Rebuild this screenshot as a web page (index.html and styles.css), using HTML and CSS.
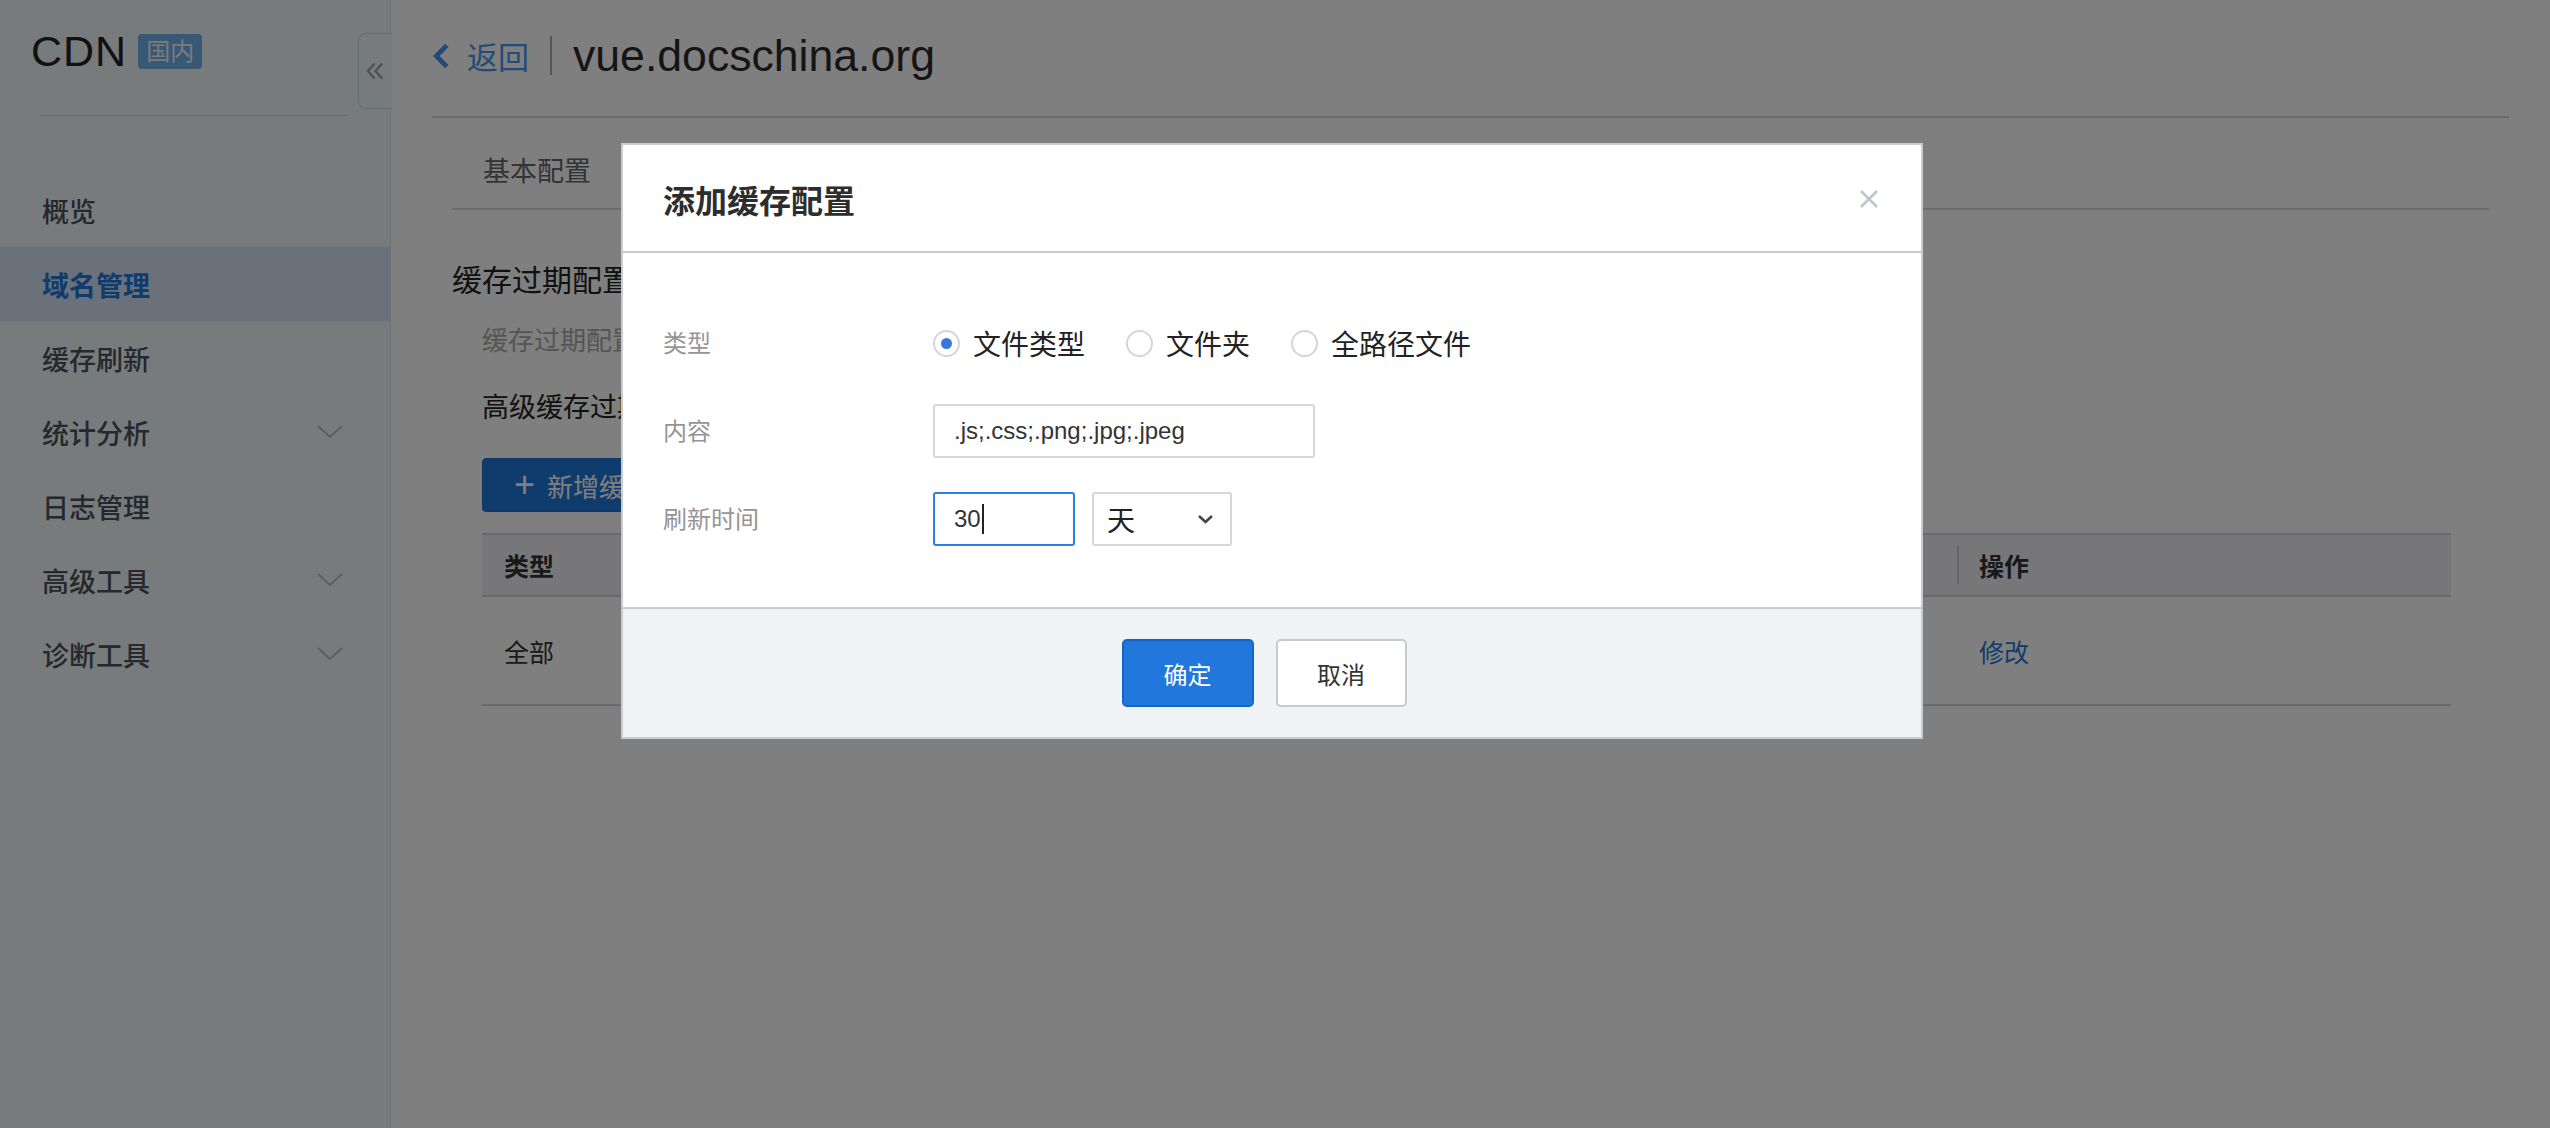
FILE: index.html
```html
<!DOCTYPE html>
<html lang="zh-CN">
<head>
<meta charset="utf-8">
<title>CDN - 域名管理</title>
<link rel="stylesheet" href="styles.css">
</head>
<body>
<div class="app">
  <aside class="sidebar">
    <div class="brand">
      <span class="brand-name">CDN</span>
      <span class="brand-tag">国内</span>
    </div>
    <div class="brand-divider"></div>
    <nav class="menu">
      <a class="menu-item">概览</a>
      <a class="menu-item active">域名管理</a>
      <a class="menu-item">缓存刷新</a>
      <a class="menu-item">统计分析<svg class="menu-caret" viewBox="0 0 26 14"><polyline points="1,1 13,12 25,1"/></svg></a>
      <a class="menu-item">日志管理</a>
      <a class="menu-item">高级工具<svg class="menu-caret" viewBox="0 0 26 14"><polyline points="1,1 13,12 25,1"/></svg></a>
      <a class="menu-item">诊断工具<svg class="menu-caret" viewBox="0 0 26 14"><polyline points="1,1 13,12 25,1"/></svg></a>
    </nav>
    <button class="collapse-tab"><svg viewBox="0 0 18 18"><polyline points="8,1 1,9 8,17"/><polyline points="16,1 9,9 16,17"/></svg></button>
  </aside>

  <main class="main">
    <header class="topbar">
      <a class="back"><svg class="back-icon" viewBox="0 0 17 24"><polyline points="14,2 4,12 14,22"/></svg><span>返回</span></a>
      <span class="topbar-sep"></span>
      <h1 class="domain">vue.docschina.org</h1>
    </header>

    <section class="content">
      <div class="tabs">
        <span class="tab">基本配置</span>
      </div>

      <h2 class="section-title">缓存过期配置</h2>
      <div class="section-body">
        <p class="section-desc">缓存过期配置</p>
        <h3 class="sub-title">高级缓存过期</h3>
        <button class="btn-add"><span class="plus">+</span>新增缓存</button>

        <div class="table">
          <div class="tr th">
            <div class="td">类型</div>
            <div class="td"></div>
            <div class="td"></div>
            <div class="td">操作</div>
          </div>
          <div class="tr">
            <div class="td">全部</div>
            <div class="td"></div>
            <div class="td"></div>
            <div class="td"><a class="link">修改</a></div>
          </div>
        </div>
      </div>
    </section>
  </main>
</div>

<div class="mask">
  <div class="modal">
    <div class="modal-head">
      <h2 class="modal-title">添加缓存配置</h2>
      <svg class="modal-close" viewBox="0 0 20 20"><path d="M2 2 L18 18 M18 2 L2 18"/></svg>
    </div>
    <div class="modal-body">
      <div class="form-row">
        <label class="form-label">类型</label>
        <div class="form-ctrl radios">
          <span class="radio checked"><span class="radio-dot"></span>文件类型</span>
          <span class="radio"><span class="radio-dot"></span>文件夹</span>
          <span class="radio"><span class="radio-dot"></span>全路径文件</span>
        </div>
      </div>
      <div class="form-row">
        <label class="form-label">内容</label>
        <div class="form-ctrl">
          <div class="input input-wide">.js;.css;.png;.jpg;.jpeg</div>
        </div>
      </div>
      <div class="form-row">
        <label class="form-label">刷新时间</label>
        <div class="form-ctrl">
          <div class="input input-num focused">30<span class="caret"></span></div>
          <div class="select"><span>天</span><svg class="select-arrow" viewBox="0 0 17 10"><polyline points="2,2 8.5,8 15,2"/></svg></div>
        </div>
      </div>
    </div>
    <div class="modal-foot">
      <button class="btn btn-primary">确定</button>
      <button class="btn btn-default">取消</button>
    </div>
  </div>
</div>
</body>
</html>
```
FILE: styles.css
```css
* { box-sizing: border-box; }
html, body { margin: 0; padding: 0; }
body {
  width: 2550px;
  height: 1128px;
  overflow: hidden;
  background: #fff;
  font-family: "Liberation Sans", "Noto Sans CJK SC", sans-serif;
  color: #333;
}
h1, h2, h3, p { margin: 0; font-weight: normal; }
button { font-family: inherit; }

.app { display: flex; height: 1128px; }

/* sidebar */
.sidebar {
  position: relative;
  width: 391px;
  flex: none;
  background: #f0f6f6;
  border-right: 1px solid #dde6e8;
}
.brand {
  display: flex;
  align-items: center;
  height: 43px;
  margin-top: 30px;
  padding-left: 31px;
}
.brand-name {
  font-size: 43px;
  line-height: 43px;
  color: #222;
  letter-spacing: 1px;
}
.brand-tag {
  margin-left: 11px;
  width: 64px;
  height: 35px;
  border-radius: 4px;
  background: #70b0ea;
  color: #f2f8ff;
  font-size: 24px;
  line-height: 35px;
  text-align: center;
}
.brand-divider {
  margin: 42px 0 0 39px;
  width: 309px;
  height: 1px;
  background: #cfd9de;
}
.menu { margin-top: 57px; display: flex; flex-direction: column; }
.menu-item {
  display: flex;
  align-items: center;
  justify-content: space-between;
  height: 74px;
  padding: 0 47px 0 42px;
  font-size: 27px;
  font-weight: 500;
  color: #4a5058;
}
.menu-item.active {
  background: #d6e2f4;
  color: #2177db;
  font-weight: 700;
}
.menu-caret {
  width: 26px;
  height: 14px;
  fill: none;
  stroke: #b4bec7;
  stroke-width: 2;
}
.collapse-tab {
  position: absolute;
  left: 358px;
  top: 33px;
  width: 34px;
  height: 76px;
  padding: 0;
  border: 1px solid #c9d6de;
  border-right: none;
  border-radius: 8px 0 0 8px;
  background: #f0f6f6;
  display: flex;
  align-items: center;
  justify-content: center;
}
.collapse-tab svg {
  width: 17px;
  height: 18px;
  fill: none;
  stroke: #9aa3ab;
  stroke-width: 2.4;
}

/* main */
.main { flex: 1; padding: 0 41px; }
.topbar {
  display: flex;
  align-items: center;
  height: 118px;
  padding-bottom: 5px;
  border-bottom: 2px solid #d4d4d4;
}
.back {
  display: flex;
  align-items: center;
  color: #4796f2;
  font-size: 31px;
}
.back-icon {
  width: 18px;
  height: 26px;
  margin-right: 17px;
  fill: none;
  stroke: #4796f2;
  stroke-width: 4.5;
}
.topbar-sep {
  width: 2px;
  height: 39px;
  margin: 0 21px 0 21px;
  background: #aaa;
}
.domain {
  font-size: 44.6px;
  color: #2b2b2b;
  line-height: 50px;
}

.content { padding: 0 20px; }
.tabs {
  display: flex;
  align-items: center;
  height: 92px;
  padding-top: 12px;
  border-bottom: 2px solid #d8d8d8;
}
.tab {
  padding: 0 31px;
  font-size: 27px;
  color: #666;
}
.section-title {
  margin-top: 51px;
  font-size: 30px;
  line-height: 40px;
  color: #222;
}
.section-body { padding: 0 38px 0 30px; }
.section-desc {
  margin-top: 22px;
  font-size: 26px;
  line-height: 36px;
  color: #aaa;
}
.sub-title {
  margin-top: 31px;
  font-size: 27px;
  line-height: 36px;
  color: #222;
}
.btn-add {
  margin-top: 32px;
  height: 54px;
  width: 240px;
  padding: 0 0 0 31px;
  border: 1px solid #1a6bcc;
  border-radius: 4px;
  background: #2177db;
  color: #fff;
  font-size: 26px;
  display: flex;
  align-items: center;
}
.plus { font-size: 36px; font-weight: 300; margin-right: 12px; line-height: 1; }

.table { margin-top: 21px; }
.tr {
  display: grid;
  grid-template-columns: 492px 492px 491px 1fr;
  border-bottom: 2px solid #d4d5da;
  height: 109px;
  align-items: center;
  font-size: 25px;
  color: #333;
}
.tr.th {
  height: 64px;
  border-top: 2px solid #d4d5da;
  background: #eeeff3;
  font-weight: 700;
}
.td { padding-left: 22px; position: relative; }
.th .td + .td::before {
  content: "";
  position: absolute;
  left: 0;
  top: 50%;
  width: 2px;
  height: 39px;
  margin-top: -20px;
  background: #c9ccd2;
}
.link { color: #2177db; }

/* modal */
.mask {
  position: fixed;
  inset: 0;
  background: rgba(0, 0, 0, 0.5);
  display: flex;
  justify-content: center;
  align-items: flex-start;
  padding: 143px 6px 0 0;
}
.modal {
  width: 1302px;
  background: #fff;
  border: 2px solid #c8ccd0;
}
.modal-head {
  display: flex;
  align-items: center;
  justify-content: space-between;
  height: 108px;
  padding: 2px 42px 0 40px;
  border-bottom: 2px solid #c6c9cd;
}
.modal-title {
  font-size: 32px;
  font-weight: 700;
  color: #2d2d2d;
}
.modal-close {
  width: 20px;
  height: 20px;
  fill: none;
  stroke: #bfc5cb;
  stroke-width: 2.5;
}
.modal-body {
  padding: 63px 40px 61px;
  display: flex;
  flex-direction: column;
  gap: 34px;
}
.form-row { display: flex; align-items: center; height: 54px; }
.form-label {
  width: 270px;
  flex: none;
  font-size: 24px;
  color: #959595;
  padding-bottom: 4px;
}
.form-ctrl { display: flex; align-items: center; }
.radios { gap: 41px; }
.radio {
  display: inline-flex;
  align-items: center;
  font-size: 28px;
  color: #222;
}
.radio-dot {
  width: 27px;
  height: 27px;
  margin-right: 13px;
  border: 2px solid #d2d6dc;
  border-radius: 50%;
  background: #fff;
  display: inline-flex;
  align-items: center;
  justify-content: center;
}
.radio.checked .radio-dot::after {
  content: "";
  width: 11px;
  height: 11px;
  border-radius: 50%;
  background: #3b78d5;
}
.input {
  display: flex;
  align-items: center;
  height: 54px;
  padding-left: 19px;
  border: 2px solid #d5d7da;
  border-radius: 3px;
  font-size: 24px;
  color: #333;
}
.input-wide { width: 382px; }
.input-num { width: 142px; }
.input.focused { border-color: #2c7fe2; }
.caret {
  width: 2px;
  height: 30px;
  margin-left: 1px;
  background: #222;
}
.select {
  display: flex;
  align-items: center;
  justify-content: space-between;
  width: 140px;
  height: 54px;
  margin-left: 17px;
  padding: 0 16px 0 13px;
  border: 2px solid #d5d7da;
  border-radius: 3px;
  font-size: 28px;
  color: #222;
}
.select-arrow {
  width: 17px;
  height: 10px;
  fill: none;
  stroke: #444;
  stroke-width: 2.5;
}
.modal-foot {
  display: flex;
  align-items: center;
  justify-content: center;
  gap: 22px;
  height: 130px;
  padding-right: 16px;
  border-top: 2px solid #c8cbcf;
  background: #eff3f6;
}
.btn {
  height: 68px;
  border-radius: 5px;
  font-size: 24px;
  padding: 0;
}
.btn-primary {
  width: 132px;
  background: #2177db;
  border: 2px solid #1166c8;
  color: #fff;
}
.btn-default {
  width: 131px;
  background: #fff;
  border: 2px solid #c5cad0;
  color: #333;
}
```
